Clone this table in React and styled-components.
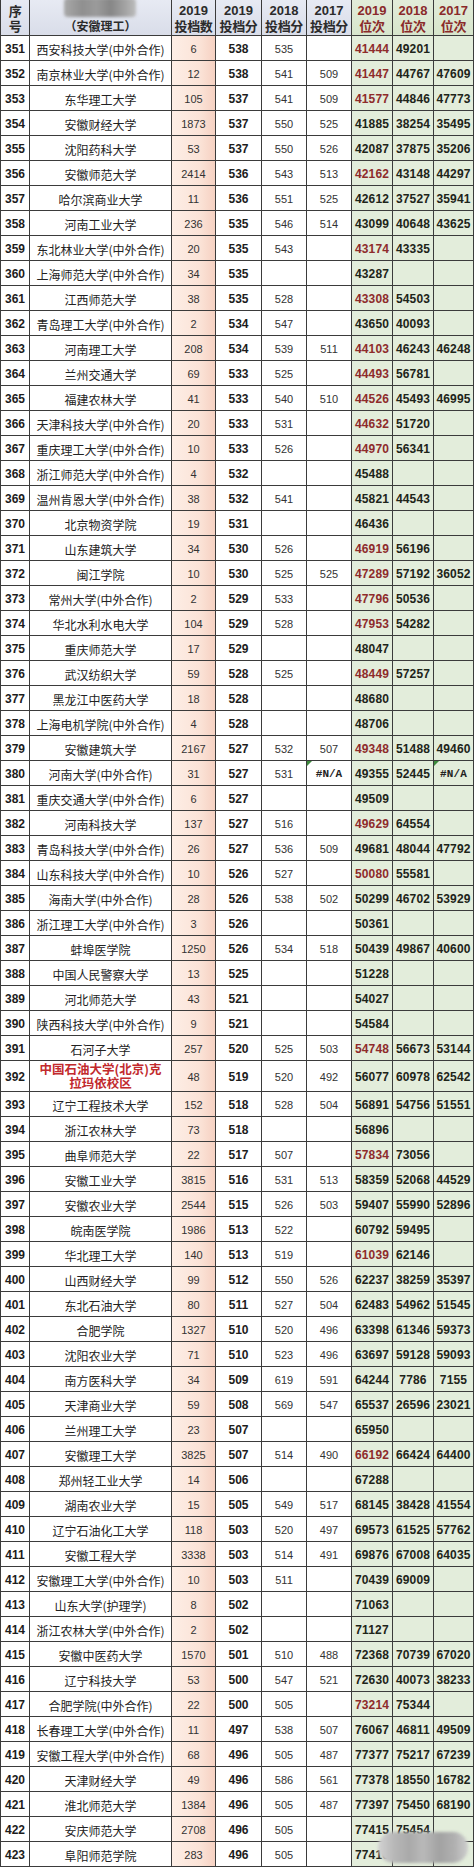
import React from "react";
import styled, { createGlobalStyle, css } from "styled-components";

const GlobalStyle = createGlobalStyle`
  html, body { margin: 0; padding: 0; background: #ffffff; }
  body { font-family: "Liberation Sans", "Noto Sans CJK SC", sans-serif; }
  * { box-sizing: border-box; }
`;

const COLS = "30px 142px 44px 46px 45px 45px 41px 41px 40px";
const LINE = "#3b3b3b";

const Sheet = styled.div`
  width: 474px;
  display: flex;
  flex-direction: column;
`;

const HeaderRow = styled.div`
  display: grid;
  grid-template-columns: ${COLS};
  height: 36px;
  border-bottom: 1px solid ${LINE};
`;

const HeadCell = styled.div`
  position: relative;
  display: flex;
  flex-direction: column;
  align-items: center;
  justify-content: center;
  border-right: 1px solid ${LINE};
  ${(p) => p.$first && css`border-left: 1px solid ${LINE};`}
  background: ${(p) =>
    p.$green
      ? "linear-gradient(to bottom, #e2ecd9, #d7e5cc)"
      : "linear-gradient(to bottom, #e7eaf3, #d9dde9)"};
  color: ${(p) => (p.$green ? "#8a2a2a" : "#2b2b2b")};
  font-family: "Liberation Sans", "Noto Sans CJK SC", sans-serif;
  font-weight: 700;
  font-size: 13px;
  line-height: 15px;
  padding-top: 1px;
`;

const HeadLine = styled.div`
  height: 15px;
  line-height: 15px;
  display: flex;
  align-items: center;
  justify-content: center;
  overflow: visible;
`;

const HeadCn = styled(HeadLine)`
  font-family: "Noto Sans CJK SC", sans-serif;
  font-weight: 700;
  font-size: 13px;
  letter-spacing: -0.3px;
`;

const NameHead = styled(HeadCn)`
  margin-top: 14px;
  font-size: 12px;
  letter-spacing: 0;
`;

const Censor = styled.div`
  position: absolute;
  left: 34px;
  top: -2px;
  width: 72px;
  height: 19px;
  border-radius: 4px;
  background: linear-gradient(to right, #a9a9a9 0%, #8f8f8f 25%, #9b9b9b 45%, #868686 65%, #a3a3a3 85%, #bdbdbd 100%);
  filter: blur(1.6px);
`;

const Row = styled.div`
  position: relative;
  display: grid;
  grid-template-columns: ${COLS};
  height: ${(p) => (p.$tall ? 31 : 25)}px;
  border-bottom: 1px solid ${LINE};
`;

const Cell = styled.div`
  position: relative;
  display: flex;
  align-items: center;
  justify-content: center;
  border-right: 1px solid ${LINE};
  padding-top: 2px;
  white-space: nowrap;
  overflow: visible;
`;

const SeqCell = styled(Cell)`
  border-left: 1px solid ${LINE};
  font-weight: 700;
  font-size: 12px;
  color: #1c1c1c;
`;

const NameCell = styled(Cell)`
  font-family: "Noto Sans CJK SC", sans-serif;
  font-size: 12px;
  color: #222;
  ${(p) =>
    p.$red &&
    css`
      white-space: normal;
      text-align: center;
      font-weight: 700;
      font-size: 12.5px;
      line-height: 14px;
      color: #c22a2d;
      padding-top: 0;
    `}
`;

const CountCell = styled(Cell)`
  background: linear-gradient(to right, #fdeee6 0%, #fbe3d7 65%, #f6d1c2 100%);
  font-size: 11px;
  color: #333;
`;

const ScoreCell = styled(Cell)`
  font-size: ${(p) => (p.$bold ? 12 : 11)}px;
  font-weight: ${(p) => (p.$bold ? 700 : 400)};
  color: ${(p) => (p.$bold ? "#1c1c1c" : "#333")};
`;

const RankCell = styled(Cell)`
  background: #e3eddb;
  font-size: 12px;
  font-weight: 700;
  letter-spacing: 0.15px;
  color: ${(p) => (p.$red ? "#8e2b2b" : "#1d2419")};
`;

const NaText = styled.span`
  font-family: "Liberation Mono", monospace;
  font-weight: 700;
  font-size: 11px;
  color: #222;
`;

const ErrorMark = styled.span`
  position: absolute;
  left: 0;
  top: 0;
  width: 0;
  height: 0;
  border-top: 5px solid #3d8a3d;
  border-right: 5px solid transparent;
`;

const Smudge = styled.div`
  position: absolute;
  right: 6px;
  top: -10px;
  width: 90px;
  height: 31px;
  border-radius: 15px;
  background: linear-gradient(to right, #d2d2d2 0%, #b7b7b7 18%, #a9a9a9 35%, #b9b9b9 50%, #a2a2a2 68%, #b0b0b0 85%, #cdcdcd 100%);
  filter: blur(1.5px);
`;

// [seq, name, count, s2019, s2018, s2017, r2019, red2019, r2018, r2017]
const D = [
  [351, "西安科技大学(中外合作)", "6", "538", "535", "", "41444", 1, "49201", ""],
  [352, "南京林业大学(中外合作)", "12", "538", "541", "509", "41447", 1, "44767", "47609"],
  [353, "东华理工大学", "105", "537", "541", "509", "41577", 1, "44846", "47773"],
  [354, "安徽财经大学", "1873", "537", "550", "525", "41885", 0, "38254", "35495"],
  [355, "沈阳药科大学", "53", "537", "550", "526", "42087", 0, "37875", "35206"],
  [356, "安徽师范大学", "2414", "536", "543", "513", "42162", 1, "43148", "44297"],
  [357, "哈尔滨商业大学", "11", "536", "551", "525", "42612", 0, "37527", "35941"],
  [358, "河南工业大学", "236", "535", "546", "514", "43099", 0, "40648", "43625"],
  [359, "东北林业大学(中外合作)", "20", "535", "543", "", "43174", 1, "43335", ""],
  [360, "上海师范大学(中外合作)", "34", "535", "", "", "43287", 0, "", ""],
  [361, "江西师范大学", "38", "535", "528", "", "43308", 1, "54503", ""],
  [362, "青岛理工大学(中外合作)", "2", "534", "547", "", "43650", 0, "40093", ""],
  [363, "河南理工大学", "208", "534", "539", "511", "44103", 1, "46243", "46248"],
  [364, "兰州交通大学", "69", "533", "525", "", "44493", 1, "56781", ""],
  [365, "福建农林大学", "41", "533", "540", "510", "44526", 1, "45493", "46995"],
  [366, "天津科技大学(中外合作)", "20", "533", "531", "", "44632", 1, "51720", ""],
  [367, "重庆理工大学(中外合作)", "10", "533", "526", "", "44970", 1, "56341", ""],
  [368, "浙江师范大学(中外合作)", "4", "532", "", "", "45488", 0, "", ""],
  [369, "温州肯恩大学(中外合作)", "38", "532", "541", "", "45821", 0, "44543", ""],
  [370, "北京物资学院", "19", "531", "", "", "46436", 0, "", ""],
  [371, "山东建筑大学", "34", "530", "526", "", "46919", 1, "56196", ""],
  [372, "闽江学院", "10", "530", "525", "525", "47289", 1, "57192", "36052"],
  [373, "常州大学(中外合作)", "2", "529", "533", "", "47796", 1, "50536", ""],
  [374, "华北水利水电大学", "104", "529", "528", "", "47953", 1, "54282", ""],
  [375, "重庆师范大学", "17", "529", "", "", "48047", 0, "", ""],
  [376, "武汉纺织大学", "59", "528", "525", "", "48449", 1, "57257", ""],
  [377, "黑龙江中医药大学", "18", "528", "", "", "48680", 0, "", ""],
  [378, "上海电机学院(中外合作)", "4", "528", "", "", "48706", 0, "", ""],
  [379, "安徽建筑大学", "2167", "527", "532", "507", "49348", 1, "51488", "49460"],
  [380, "河南大学(中外合作)", "31", "527", "531", "#N/A", "49355", 0, "52445", "#N/A"],
  [381, "重庆交通大学(中外合作)", "6", "527", "", "", "49509", 0, "", ""],
  [382, "河南科技大学", "137", "527", "516", "", "49629", 1, "64554", ""],
  [383, "青岛科技大学(中外合作)", "26", "527", "536", "509", "49681", 0, "48044", "47792"],
  [384, "山东科技大学(中外合作)", "10", "526", "527", "", "50080", 1, "55581", ""],
  [385, "海南大学(中外合作)", "28", "526", "538", "502", "50299", 0, "46702", "53929"],
  [386, "浙江理工大学(中外合作)", "3", "526", "", "", "50361", 0, "", ""],
  [387, "蚌埠医学院", "1250", "526", "534", "518", "50439", 0, "49867", "40600"],
  [388, "中国人民警察大学", "13", "525", "", "", "51228", 0, "", ""],
  [389, "河北师范大学", "43", "521", "", "", "54027", 0, "", ""],
  [390, "陕西科技大学(中外合作)", "9", "521", "", "", "54584", 0, "", ""],
  [391, "石河子大学", "257", "520", "525", "503", "54748", 1, "56673", "53144"],
  [392, "RED", "48", "519", "520", "492", "56077", 0, "60978", "62542"],
  [393, "辽宁工程技术大学", "152", "518", "528", "504", "56891", 0, "54756", "51551"],
  [394, "浙江农林大学", "73", "518", "", "", "56896", 0, "", ""],
  [395, "曲阜师范大学", "22", "517", "507", "", "57834", 1, "73056", ""],
  [396, "安徽工业大学", "3815", "516", "531", "513", "58359", 0, "52068", "44529"],
  [397, "安徽农业大学", "2544", "515", "526", "503", "59407", 0, "55990", "52896"],
  [398, "皖南医学院", "1986", "513", "522", "", "60792", 0, "59495", ""],
  [399, "华北理工大学", "140", "513", "519", "", "61039", 1, "62146", ""],
  [400, "山西财经大学", "99", "512", "550", "526", "62237", 0, "38259", "35397"],
  [401, "东北石油大学", "80", "511", "527", "504", "62483", 0, "54962", "51545"],
  [402, "合肥学院", "1327", "510", "520", "496", "63398", 0, "61346", "59373"],
  [403, "沈阳农业大学", "71", "510", "523", "496", "63697", 0, "59128", "59093"],
  [404, "南方医科大学", "34", "509", "619", "591", "64244", 0, "7786", "7155"],
  [405, "天津商业大学", "59", "508", "569", "547", "65537", 0, "26596", "23021"],
  [406, "兰州理工大学", "23", "507", "", "", "65950", 0, "", ""],
  [407, "安徽理工大学", "3825", "507", "514", "490", "66192", 1, "66424", "64400"],
  [408, "郑州轻工业大学", "14", "506", "", "", "67288", 0, "", ""],
  [409, "湖南农业大学", "15", "505", "549", "517", "68145", 0, "38428", "41554"],
  [410, "辽宁石油化工大学", "118", "503", "520", "497", "69573", 0, "61525", "57762"],
  [411, "安徽工程大学", "3338", "503", "514", "491", "69876", 0, "67008", "64035"],
  [412, "安徽理工大学(中外合作)", "10", "503", "511", "", "70439", 0, "69009", ""],
  [413, "山东大学(护理学)", "8", "502", "", "", "71063", 0, "", ""],
  [414, "浙江农林大学(中外合作)", "2", "502", "", "", "71127", 0, "", ""],
  [415, "安徽中医药大学", "1570", "501", "510", "488", "72368", 0, "70739", "67020"],
  [416, "辽宁科技大学", "53", "500", "547", "521", "72630", 0, "40073", "38233"],
  [417, "合肥学院(中外合作)", "22", "500", "505", "", "73214", 1, "75344", ""],
  [418, "长春理工大学(中外合作)", "11", "497", "538", "507", "76067", 0, "46811", "49509"],
  [419, "安徽工程大学(中外合作)", "68", "496", "505", "487", "77377", 0, "75217", "67239"],
  [420, "天津财经大学", "49", "496", "586", "561", "77378", 0, "18550", "16782"],
  [421, "淮北师范大学", "1384", "496", "505", "487", "77397", 0, "75450", "68190"],
  [422, "安庆师范大学", "2708", "496", "505", "", "77415", 0, "75454", ""],
  [423, "阜阳师范学院", "283", "496", "505", "", "77416", 0, "", ""],
];

const cellText = (v) => (v === "#N/A" ? <NaText>#N/A</NaText> : v);

function DataRow({ r }) {
  const [seq, name, count, s19, s18, s17, r19, red, r18, r17] = r;
  const special = name === "RED";
  const isNa = s17 === "#N/A";
  return (
    <Row $tall={special}>
      <SeqCell>{seq}</SeqCell>
      {special ? (
        <NameCell $red>
          中国石油大学(北京)克
          <br />
          拉玛依校区
        </NameCell>
      ) : (
        <NameCell>{name}</NameCell>
      )}
      <CountCell>{count}</CountCell>
      <ScoreCell $bold>{s19}</ScoreCell>
      <ScoreCell>{s18}</ScoreCell>
      <ScoreCell>
        {isNa && <ErrorMark />}
        {cellText(s17)}
      </ScoreCell>
      <RankCell $red={!!red}>{r19}</RankCell>
      <RankCell>{r18}</RankCell>
      <RankCell>
        {r17 === "#N/A" && <ErrorMark />}
        {cellText(r17)}
      </RankCell>
      {seq === 423 && <Smudge />}
    </Row>
  );
}

const HEADS = [
  ["2019", "投档数", false],
  ["2019", "投档分", false],
  ["2018", "投档分", false],
  ["2017", "投档分", false],
  ["2019", "位次", true],
  ["2018", "位次", true],
  ["2017", "位次", true],
];

export default function App() {
  return (
    <>
      <GlobalStyle />
      <Sheet>
        <HeaderRow>
          <HeadCell $first>
            <HeadCn>序</HeadCn>
            <HeadCn>号</HeadCn>
          </HeadCell>
          <HeadCell>
            <Censor />
            <NameHead>（安徽理工）</NameHead>
          </HeadCell>
          {HEADS.map(([y, t, g], i) => (
            <HeadCell key={i} $green={g}>
              <HeadLine>{y}</HeadLine>
              <HeadCn>{t}</HeadCn>
            </HeadCell>
          ))}
        </HeaderRow>
        {D.map((r) => (
          <DataRow key={r[0]} r={r} />
        ))}
      </Sheet>
    </>
  );
}
